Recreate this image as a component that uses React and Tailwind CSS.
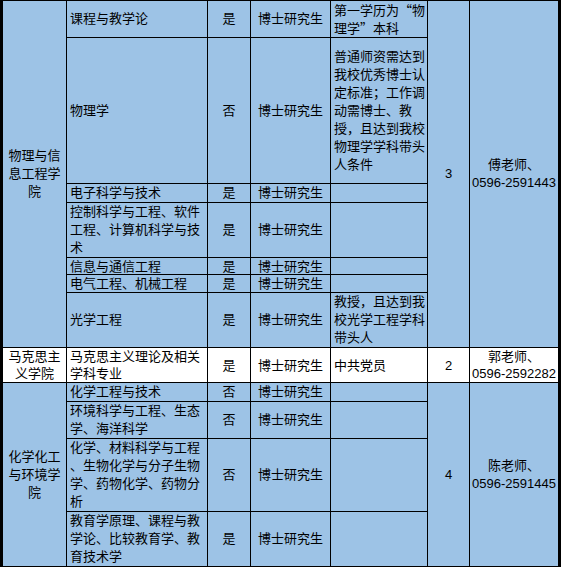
import React from 'react';

const blue = 'bg-[#9dc3e6]';
const td = 'border border-black p-0 align-middle';
const cjk = "font-['Noto_Sans_CJK_SC',sans-serif]";

export default function App() {
    return (
        <div
            className="w-[561px] h-[567px] bg-black overflow-hidden pl-[2px] text-[13px] leading-[18px] text-black"
            style={{ fontFamily: '"Liberation Sans", "Noto Sans CJK SC", sans-serif' }}
        >
            <table className="table-fixed border-collapse w-[556px]">
                <colgroup>
                    <col className="w-[64px]" />
                    <col className="w-[141px]" />
                    <col className="w-[43px]" />
                    <col className="w-[80px]" />
                    <col className="w-[97px]" />
                    <col className="w-[42px]" />
                    <col className="w-[89px]" />
                </colgroup>
                <tbody>
                    <tr className={`h-[37px] ${blue}`}>
                        <td rowSpan={7} className={`${td} text-center`}>物理与信<br />息工程学<br />院</td>
                        <td className={`${td} pl-[3px]`}>课程与教学论</td>
                        <td className={`${td} text-center`}>是</td>
                        <td className={`${td} text-center`}>博士研究生</td>
                        <td className={`${td} ${cjk} pl-[3px]`}>第一学历为“物<br />理学”本科</td>
                        <td rowSpan={7} className={`${td} text-center`}>3</td>
                        <td rowSpan={7} className={`${td} text-center whitespace-nowrap`}>傅老师、<br />0596-2591443</td>
                    </tr>
                    <tr className={`h-[146px] ${blue}`}>
                        <td className={`${td} pl-[3px]`}>物理学</td>
                        <td className={`${td} text-center`}>否</td>
                        <td className={`${td} text-center`}>博士研究生</td>
                        <td className={`${td} pl-[3px]`}>普通师资需达到<br />我校优秀博士认<br />定标准；工作调<br />动需博士、教<br />授，且达到我校<br />物理学学科带头<br />人条件</td>
                    </tr>
                    <tr className={`h-[19px] ${blue}`}>
                        <td className={`${td} pl-[3px]`}>电子科学与技术</td>
                        <td className={`${td} text-center`}>是</td>
                        <td className={`${td} text-center`}>博士研究生</td>
                        <td className={td}></td>
                    </tr>
                    <tr className={`h-[55px] ${blue}`}>
                        <td className={`${td} pl-[3px]`}>控制科学与工程、软件<br />工程、计算机科学与技<br />术</td>
                        <td className={`${td} text-center`}>是</td>
                        <td className={`${td} text-center`}>博士研究生</td>
                        <td className={td}></td>
                    </tr>
                    <tr className={`h-[17px] ${blue} leading-[15px]`}>
                        <td className={`${td} pl-[3px]`}>信息与通信工程</td>
                        <td className={`${td} text-center`}>是</td>
                        <td className={`${td} text-center`}>博士研究生</td>
                        <td className={td}></td>
                    </tr>
                    <tr className={`h-[18px] ${blue} leading-[16px]`}>
                        <td className={`${td} pl-[3px]`}>电气工程、机械工程</td>
                        <td className={`${td} text-center`}>是</td>
                        <td className={`${td} text-center`}>博士研究生</td>
                        <td className={td}></td>
                    </tr>
                    <tr className={`h-[55px] ${blue}`}>
                        <td className={`${td} pl-[3px]`}>光学工程</td>
                        <td className={`${td} text-center`}>是</td>
                        <td className={`${td} text-center`}>博士研究生</td>
                        <td className={`${td} pl-[3px]`}>教授，且达到我<br />校光学工程学科<br />带头人</td>
                    </tr>
                    <tr className="h-[35px] bg-white leading-[17px]">
                        <td className={`${td} text-center`}>马克思主<br />义学院</td>
                        <td className={`${td} pl-[3px]`}>马克思主义理论及相关<br />学科专业</td>
                        <td className={`${td} text-center`}>是</td>
                        <td className={`${td} text-center`}>博士研究生</td>
                        <td className={`${td} pl-[3px]`}>中共党员</td>
                        <td className={`${td} text-center`}>2</td>
                        <td className={`${td} text-center whitespace-nowrap`}>郭老师、<br />0596-2592282</td>
                    </tr>
                    <tr className={`h-[19px] ${blue}`}>
                        <td rowSpan={4} className={`${td} text-center`}>化学化工<br />与环境学<br />院</td>
                        <td className={`${td} pl-[3px]`}>化学工程与技术</td>
                        <td className={`${td} text-center`}>否</td>
                        <td className={`${td} text-center`}>博士研究生</td>
                        <td className={td}></td>
                        <td rowSpan={4} className={`${td} text-center`}>4</td>
                        <td rowSpan={4} className={`${td} text-center whitespace-nowrap`}>陈老师、<br />0596-2591445</td>
                    </tr>
                    <tr className={`h-[35px] ${blue}`}>
                        <td className={`${td} pl-[3px]`}>环境科学与工程、生态<br />学、海洋科学</td>
                        <td className={`${td} text-center`}>否</td>
                        <td className={`${td} text-center`}>博士研究生</td>
                        <td className={td}></td>
                    </tr>
                    <tr className={`h-[72px] ${blue}`}>
                        <td className={`${td} pl-[3px]`}>化学、材料科学与工程<br />、生物化学与分子生物<br />学、药物化学、药物分<br />析</td>
                        <td className={`${td} text-center`}>否</td>
                        <td className={`${td} text-center`}>博士研究生</td>
                        <td className={td}></td>
                    </tr>
                    <tr className={`h-[54px] ${blue}`}>
                        <td className={`${td} pl-[3px]`}>教育学原理、课程与教<br />学论、比较教育学、教<br />育技术学</td>
                        <td className={`${td} text-center`}>是</td>
                        <td className={`${td} text-center`}>博士研究生</td>
                        <td className={td}></td>
                    </tr>
                </tbody>
            </table>
        </div>
    );
}
